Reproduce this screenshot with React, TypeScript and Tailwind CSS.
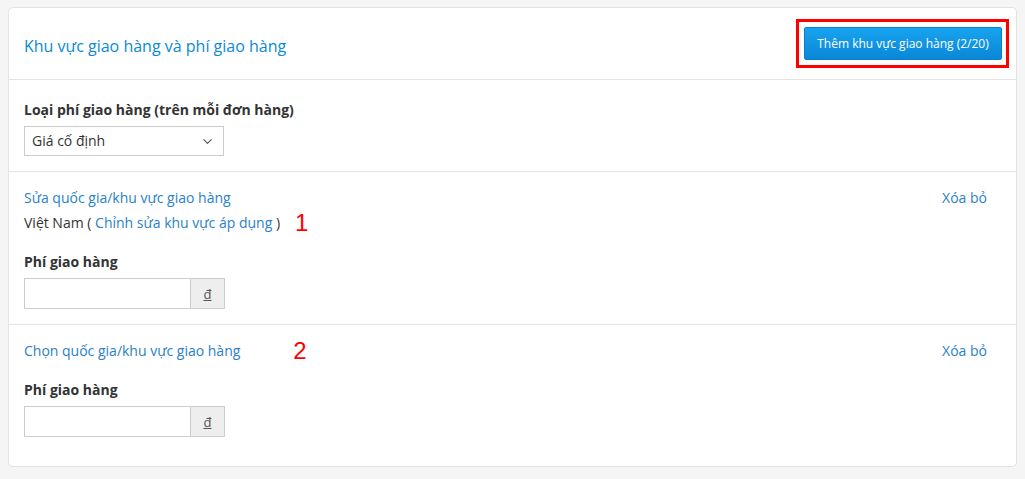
import { ChevronDown } from "lucide-react";

function FeeInput() {
  return (
    <div className="flex w-[201px] h-[31px] border border-[#cccccc]">
      <input className="flex-1 min-w-0 px-2 text-[14px] outline-none bg-white" />
      <div className="w-[34px] flex items-center justify-center bg-[#eeeeee] border-l border-[#cccccc] text-[13px] text-[#555]">
        <span className="underline">đ</span>
      </div>
    </div>
  );
}

export default function App() {
  return (
    <div className="min-h-screen bg-[#f5f5f5] pt-[7px] pl-[8px] pr-[8px] pb-3 font-['Open_Sans',sans-serif] text-[#333]">
      <div className="bg-white border border-[#e3e3e3] rounded-[5px]">
        <header className="flex items-center justify-between h-[72px] pl-[15px] pr-[7px] border-b border-[#e3e3e3]">
          <h2 className="text-[16px] text-[#0a8ad6] mt-[4px]">Khu vực giao hàng và phí giao hàng</h2>
          <div className="border-[3px] border-[#ff0000] pl-[5px] pr-[4px] py-[5px]">
            <button className="h-[33px] w-[198px] rounded-[2px] bg-gradient-to-b from-[#17a3ef] to-[#0a88d8] border border-[#0a7fcb] text-white text-[12px]">
              Thêm khu vực giao hàng (2/20)
            </button>
          </div>
        </header>

        <section className="px-[15px] pt-[20px] pb-[15px] border-b border-[#e3e3e3] text-[14px] leading-[20px]">
          <div className="font-bold text-[#333]">Loại phí giao hàng (trên mỗi đơn hàng)</div>
          <div className="mt-[6px] flex items-center justify-between w-[200px] h-[30px] border border-[#cccccc] pl-[7px] pr-[8px] text-[#333]">
            <span>Giá cố định</span>
            <ChevronDown size={15} strokeWidth={1.8} className="text-[#555]" />
          </div>
        </section>

        <section className="px-[15px] pt-[16px] pb-[15px] border-b border-[#e3e3e3] text-[14px] leading-[20px]">
          <div className="flex justify-between pr-[14px]">
            <a className="text-[#2a7fc9]">Sửa quốc gia/khu vực giao hàng</a>
            <a className="text-[#2a7fc9]">Xóa bỏ</a>
          </div>
          <div className="flex items-center h-[20px] mt-[5px] text-[#333]">
            <span>
              Việt Nam ( <a className="text-[#2a7fc9]">Chỉnh sửa khu vực áp dụng</a> )
            </span>
            <span className="ml-[15px] text-[24px] leading-none text-[#ff0000] font-['Liberation_Sans',sans-serif]">1</span>
          </div>
          <div className="mt-[19px] font-bold">Phí giao hàng</div>
          <div className="mt-[6px]">
            <FeeInput />
          </div>
        </section>

        <section className="px-[15px] pt-[16px] pb-[29px] text-[14px] leading-[20px]">
          <div className="flex justify-between items-center h-[20px] pr-[14px]">
            <div className="flex items-center">
              <a className="text-[#2a7fc9]">Chọn quốc gia/khu vực giao hàng</a>
              <span className="ml-[53px] text-[24px] leading-none text-[#ff0000] font-['Liberation_Sans',sans-serif]">2</span>
            </div>
            <a className="text-[#2a7fc9]">Xóa bỏ</a>
          </div>
          <div className="mt-[19px] font-bold">Phí giao hàng</div>
          <div className="mt-[6px]">
            <FeeInput />
          </div>
        </section>
      </div>
    </div>
  );
}
